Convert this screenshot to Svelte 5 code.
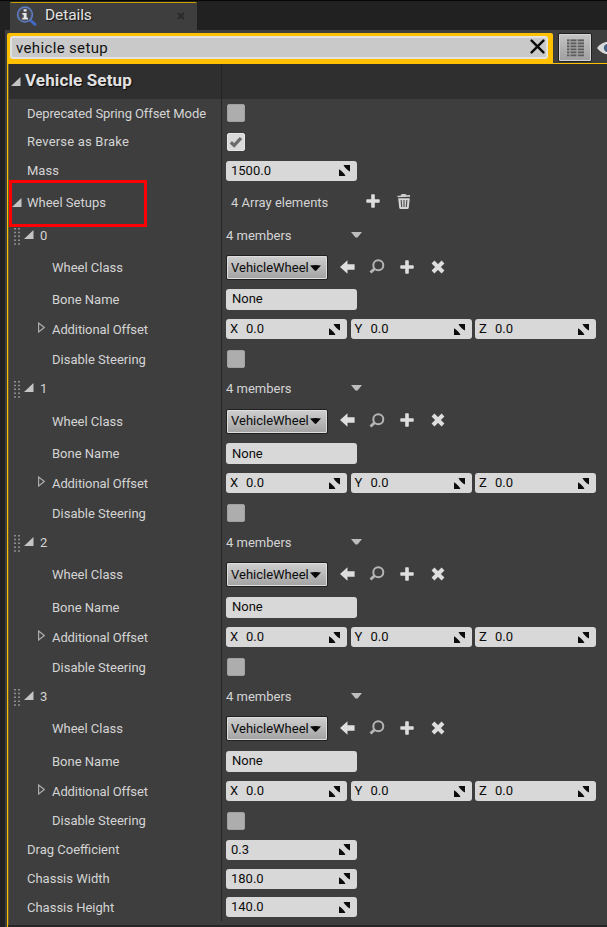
<script>
  const members = [
    { h: [31, 33, 30, 30, 30] },
    { h: [29, 36, 29, 30, 30] },
    { h: [29, 35, 30, 30, 30] },
    { h: [29, 35, 30, 30, 29] }
  ];
  const tail = [
    { label: 'Drag Coefficient', value: '0.3', h: 29 },
    { label: 'Chassis Width', value: '180.0', h: 29 },
    { label: 'Chassis Height', value: '140.0', h: 28 }
  ];
</script>

{#snippet spin()}
  <svg class="spin" width="11" height="11" viewBox="0 0 11 11">
    <path d="M4.5 0H11V6.5L8.8 5.2 5.8 2.2ZM0 4.3L2.2 5.8 5.2 8.8 6.5 11H0Z" fill="#0c0c0c" />
  </svg>
{/snippet}

{#snippet num(value)}
  <div class="field"><span>{value}</span>{@render spin()}</div>
{/snippet}

{#snippet open()}
  <svg class="open" width="10" height="9" viewBox="0 0 10 9"><path d="M9.5 0V9H0Z" fill="#c4c4c4" /></svg>
{/snippet}

{#snippet plus()}
  <svg width="14" height="14" viewBox="0 0 14 14"><path d="M5.2 1Q5.2.3 6 .3H8Q8.8.3 8.8 1V5.2H13Q13.7 5.2 13.7 6V8Q13.7 8.8 13 8.8H8.8V13Q8.8 13.7 8 13.7H6Q5.2 13.7 5.2 13V8.8H1Q.3 8.8.3 8V6Q.3 5.2 1 5.2H5.2Z" fill="#dedede" /></svg>
{/snippet}

<div class="app">
  <div class="tabs">
    <div class="tab">
      <svg class="info" width="22" height="20" viewBox="0 0 22 20">
        <path d="M13 13L19 18.3" stroke="#4167c4" stroke-width="3" stroke-linecap="round" />
        <circle cx="9" cy="8.5" r="7.4" fill="#45474c" stroke="#5d7cc0" stroke-width="1.7" />
        <path d="M7.6 3.2H10.6V5.5H7.6ZM6.4 7H10.6V11.8H12V13.6H6.3V11.8H7.7V8.7H6.4Z" fill="#e8e8e8" />
      </svg>
      <span class="tabname">Details</span>
      <svg class="close" width="8" height="8" viewBox="0 0 8 8"><path d="M1 1L7 7M7 1L1 7" stroke="#292929" stroke-width="1.8" /></svg>
    </div>
  </div>
  <div class="panel">
    <div class="searchbar">
      <div class="ring">
        <div class="search">
          <span>vehicle setup</span>
          <svg width="15" height="15" viewBox="0 0 15 15"><path d="M1.6 1.6L13.4 13.4M13.4 1.6L1.6 13.4" stroke="#0a0a0a" stroke-width="2.4" stroke-linecap="round" /></svg>
        </div>
      </div>
      <div class="grid">
        <svg width="17" height="18" viewBox="0 0 17 18">
          <rect width="17" height="18" fill="#a4a4a4" />
          {#each [0, 1, 2, 3, 4, 5] as r}
            <path d="M0 {r * 3 + 1.3}H2.4M3.6 {r * 3 + 1.3}H9.4M10.8 {r * 3 + 1.3}H17" stroke="#5c5c5c" stroke-width="1.8" />
          {/each}
        </svg>
      </div>
      <svg class="eye" width="10" height="14" viewBox="0 0 10 14">
        <path d="M0 7Q4 1.5 10 .8V13.2Q4 12.5 0 7Z" fill="#d9d9d9" />
        <circle cx="11" cy="7" r="4.2" fill="#456087" />
      </svg>
    </div>

    <div class="body">
      <div class="row head" style="height:35px">
        <div class="name">{@render open()}<b>Vehicle Setup</b></div>
        <div class="val"></div>
      </div>
      <div class="row" style="height:28px">
        <div class="name l1 tight">Deprecated Spring Offset Mode</div>
        <div class="val"><i class="check"></i></div>
      </div>
      <div class="row" style="height:29px">
        <div class="name l1 loose">Reverse as Brake</div>
        <div class="val">
          <i class="check on"><svg width="14" height="12" viewBox="0 0 14 12"><path d="M1.8 6.2L5.2 9.4 12 2" fill="none" stroke="#6b6b6b" stroke-width="3.3" /></svg></i>
        </div>
      </div>
      <div class="row" style="height:29px">
        <div class="name l1">Mass</div>
        <div class="val">{@render num('1500.0')}</div>
      </div>
      <div class="row" style="height:35px">
        <div class="name array">{@render open()}<span>Wheel Setups</span><i class="mark"></i></div>
        <div class="val arrayval">
          <span class="count">4 Array elements</span>
          {@render plus()}
          <svg class="bin" width="14" height="15" viewBox="0 0 14 15">
            <path d="M.5 2.5L13 1.8M4 1.7Q6.5-.3 9 1.5" stroke="#cfcfcf" stroke-width="1.7" fill="none" />
            <path d="M1.2 4.3H12.8L11.8 13.5Q11.6 15 10.3 15H3.7Q2.4 15 2.2 13.5Z" fill="#d6d6d6" />
            <path d="M4.2 6L4.7 13M7 6V13M9.8 6L9.3 13" stroke="#555" stroke-width="1.2" />
          </svg>
        </div>
      </div>

      {#each members as m, i}
        <div class="row" style="height:{m.h[0]}px">
          <div class="name member">
            <svg class="grip" width="6" height="17" viewBox="0 0 6 17"><path d="M1 0V17M5 0V17" stroke="#8e8e8e" stroke-width="2" stroke-dasharray="1.5 2.3" /></svg>
            {@render open()}<span>{i}</span>
          </div>
          <div class="val">
            <span class="members">4 members</span>
            <svg class="drop" width="11" height="6" viewBox="0 0 11 6"><path d="M0 0H11L6.5 5.5H4.5Z" fill="#bdbdbd" /></svg>
          </div>
        </div>
        <div class="row" style="height:{m.h[1]}px">
          <div class="name l2">Wheel Class</div>
          <div class="val">
            <div class="combo"><span>VehicleWheel</span><svg width="11" height="6" viewBox="0 0 11 6"><path d="M0 .6Q5.5-.6 11 .6L6.3 5.6Q5.5 6.2 4.7 5.6Z" fill="#080808" /></svg></div>
            <div class="tools">
              <svg width="15" height="14" viewBox="0 0 15 14"><path d="M0 7L7.5.2V4.3H14.6V9.7H7.5V13.8Z" fill="#dedede" /></svg>
              <svg width="16" height="15" viewBox="0 0 16 15"><circle cx="9.3" cy="6.2" r="5" fill="none" stroke="#b5b5b5" stroke-width="2" /><path d="M5.5 9.8L1.5 13.6" stroke="#b5b5b5" stroke-width="2.8" /></svg>
              {@render plus()}
              <svg width="14" height="14" viewBox="0 0 14 14"><path d="M2 2L12 12M12 2L2 12" stroke="#dedede" stroke-width="4" /></svg>
            </div>
          </div>
        </div>
        <div class="row" style="height:{m.h[2]}px">
          <div class="name l2">Bone Name</div>
          <div class="val"><div class="field text"><span>None</span></div></div>
        </div>
        <div class="row" style="height:{m.h[3]}px">
          <div class="name offset tight">
            <svg width="7" height="11" viewBox="0 0 7 11"><path d="M.6 1V10L6.2 5.5Z" fill="none" stroke="#aaa" stroke-width="1.2" /></svg>
            <span>Additional Offset</span>
          </div>
          <div class="val xyz">
            {#each ['X', 'Y', 'Z'] as axis}
              <div class="field axis"><em>{axis}</em><span>0.0</span>{@render spin()}</div>
            {/each}
          </div>
        </div>
        <div class="row" style="height:{m.h[4]}px">
          <div class="name l2">Disable Steering</div>
          <div class="val"><i class="check"></i></div>
        </div>
      {/each}

      {#each tail as t}
        <div class="row" style="height:{t.h}px">
          <div class="name l1">{t.label}</div>
          <div class="val">{@render num(t.value)}</div>
        </div>
      {/each}
      <div class="foot"></div>
    </div>
  </div>
</div>

<style>
  :global(body) { background: #212121; }
  .app {
    box-sizing: border-box;
    width: 607px;
    height: 927px;
    overflow: hidden;
    background: #212121;
    border-top: 1px solid #060606;
    font: 13px/16px Roboto, 'Noto Sans', sans-serif;
    letter-spacing: 0;
    color: #d4d4d4;
    display: flex;
    flex-direction: column;
  }
  svg { display: block; flex: none; }
  .tabs { height: 29px; padding: 1px 0 0 10px; box-sizing: border-box; flex: none; }
  .tab {
    width: 187px;
    height: 28px;
    box-sizing: border-box;
    background: #3e3e3e;
    border-top: 1px solid #c9a000;
    border-radius: 2px 2px 0 0;
    display: flex;
    align-items: center;
    padding: 0 12px 1px 6px;
  }
  .tabname { font-size: 15.5px; letter-spacing: -0.1px; margin: -2px 0 0 7px; color: #e3e3e3; text-shadow: 1px 1px 1px #111; flex: 1; }
  .panel { margin-left: 5px; background: #3e3e3e; flex: 1; padding: 3px 0 0 2px; min-height: 0; display: flex; flex-direction: column; }
  .searchbar { height: 31px; display: flex; align-items: flex-start; flex: none; }
  .ring { width: 546px; height: 31px; box-sizing: border-box; background: #ffc000; padding: 3px 5px 5px 3px; border-radius: 2px 2px 0 0; }
  .search {
    box-sizing: border-box;
    height: 23px;
    border: 2px solid #e2e2e2;
    border-radius: 3px;
    background: #c9c9c9;
    color: #111;
    display: flex;
    align-items: center;
    justify-content: space-between;
    padding: 0 0 0 4px;
    font-size: 15px;
    letter-spacing: 0.35px;
  }
  .search svg { margin: -2px 1px 0 0; }
  .grid {
    width: 34px;
    height: 29px;
    box-sizing: border-box;
    margin-left: 5px;
    border: 1px solid #1f1f1f;
    outline-offset: -2px;
    outline: 1px solid #d4d4d4;
    border-radius: 2px;
    background: linear-gradient(#c4c4c4, #9e9e9e);
    display: flex;
    align-items: center;
    justify-content: center;
  }
  .eye { margin: 8px 0 0 5px; }
  .body { flex: 1; border-left: 1px solid #ffc000; border-top: 1px solid #ffc000; margin-top: -1px; box-shadow: inset 1px 0 #685a2a; display: flex; flex-direction: column; min-height: 0; }
  .row { display: flex; box-sizing: border-box; flex: none; }
  .name { width: 214px; box-sizing: border-box; border-right: 1px solid #252525; display: flex; align-items: center; white-space: nowrap; padding: 1px 0 0 4px; }
  .val { flex: 1; display: flex; align-items: center; padding-left: 4px; white-space: nowrap; }
  .head { background: #2f2f2f; margin-left: 1px; }
  .head .name { width: 213px; padding: 0 0 3px 2px; }
  .head b { font-size: 17px; letter-spacing: 0.13px; font-weight: 700; color: #e2e2e2; text-shadow: 1px 1px 1px #0b0b0b; margin-left: 4px; }
  .head .open { margin-top: 3px; }
  .name.l1 { padding-left: 19px; }
  .name.l2 { padding-left: 44px; }
  .name.tight { letter-spacing: -0.1px; }
  .name.loose { letter-spacing: 0.2px; }
  .array { position: relative; }
  .array span { margin-left: 5px; }
  .array .open { margin-top: -2px; }
  .mark { position: absolute; left: 1px; top: -5px; width: 138px; height: 47px; box-sizing: border-box; border: 3px solid #fe0000; }
  .member { padding-left: 6px; }
  .member .open { margin: -4px 6px 0 4px; }
  .check { width: 18px; height: 18px; box-sizing: border-box; margin-left: 1px; border-radius: 2px; background: #adadad; border: 1px solid #a0a0a0; display: flex; align-items: center; justify-content: center; }
  .check.on { background: #dadada; border-color: #e6e6e6; }
  .field {
    width: 131px;
    height: 20px;
    box-sizing: border-box;
    border-radius: 3px;
    background: #d8d8d8;
    color: #0c0c0c;
    display: flex;
    align-items: center;
    justify-content: space-between;
    padding: 0 7px 0 5px;
  }
  .field.text { height: 21px; padding-left: 6px; }
  .xyz { gap: 3.5px; }
  .field.axis { width: 121px; padding-left: 4px; }
  .axis em { font-style: normal; width: 16px; }
  .axis span { flex: 1; }
  .arrayval { padding-left: 9px; }
  .count { width: 135px; }
  .arrayval svg { margin-top: -3px; }
  .arrayval .bin { margin-left: 17px; }
  .members { width: 125px; }
  .drop { margin-top: -2px; }
  .combo {
    width: 102px;
    height: 25px;
    box-sizing: border-box;
    border: 1px solid #202020;
    box-shadow: inset 0 0 0 1px #dedede;
    border-radius: 2px;
    background: linear-gradient(#cfcfcf, #a2a2a2);
    color: #0c0c0c;
    display: flex;
    align-items: center;
    padding-left: 4px;
    letter-spacing: 0;
  }
  .combo svg { margin-left: 1px; }
  .tools { display: flex; align-items: center; gap: 15px; margin: -2px 0 0 12px; }
  .tools svg:nth-child(2) { margin-left: -1px; }
  .tools svg:nth-child(4) { margin-left: 2px; }
  .offset { padding-left: 30px; }
  .offset span { margin-left: 7px; }
  .offset svg { margin-top: -4px; }
  .foot { flex: 1; margin-top: 4px; background: #262626; }
</style>
